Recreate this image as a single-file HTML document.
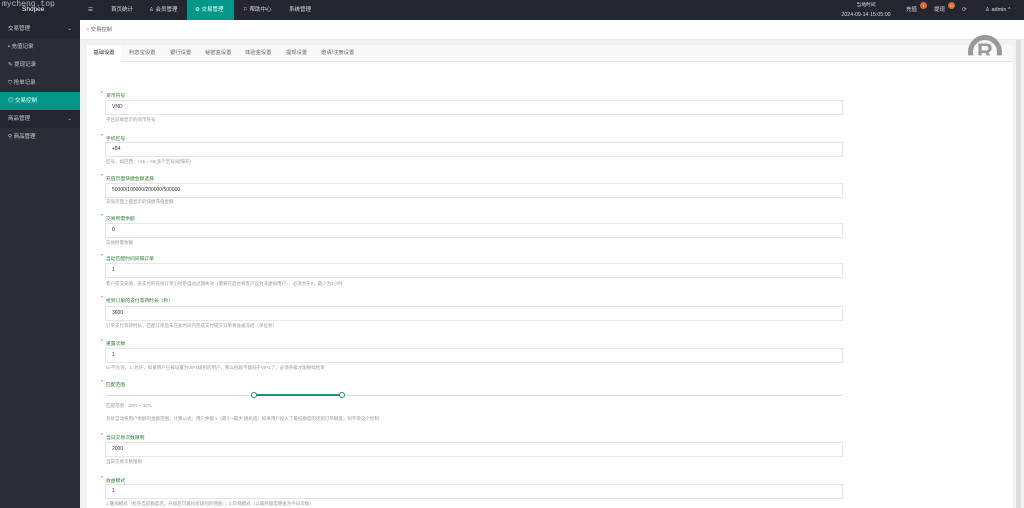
<!DOCTYPE html><html><head><meta charset="utf-8"><style>
*{margin:0;padding:0;box-sizing:border-box}
html{width:1024px;height:508px;overflow:hidden}
body{width:1024px;height:508px;overflow:hidden;background:#f2f2f2;font-family:"Liberation Sans","Noto Sans CJK SC",sans-serif;font-size:5px;color:#333;position:relative}
.a{position:absolute}
.top{left:0;top:0;width:1024px;height:20px;background:#23262e;color:#ddd}
.side{left:0;top:20px;width:80px;height:488px;background:#2a2d35;color:#ccc}
.si{position:absolute;left:0;width:80px;height:18px;line-height:18px;padding-left:8px;font-size:5.5px}
.card{left:87px;top:45px;width:926px;height:463px;background:#fff}
.lab{position:absolute;left:106px;color:#2e7d32;font-size:4.8px}
.lab:before{content:"* ";color:#c00;position:absolute;left:-5px;top:-1px}
.inp{position:absolute;left:105px;width:738px;height:15px;border:1px solid #e6e6e6;background:#fff;padding-left:6px;line-height:13px;font-size:5px;color:#333}
.hint{position:absolute;left:106px;color:#999;font-size:4.5px}
.nav{position:absolute;top:0;height:20px;line-height:20px;font-size:5.5px;color:#ddd}
.tab{position:absolute;top:45px;height:17px;line-height:17px;font-size:5.3px;color:#666}
</style></head><body>
<div class="a top">
<div class="nav" style="left:22px;color:#fff;font-size:6.5px">Shopee</div>
<div class="nav" style="left:2px;font-size:8px;font-family:'Liberation Mono',monospace;color:#bbb;top:-5px">mycheng.top</div>
<div class="nav" style="left:88px">☰</div>
<div class="nav" style="left:111px">首页统计</div>
<div class="nav" style="left:149px">♙ 会员管理</div>
<div class="nav" style="left:187px;width:47px;background:#009688;color:#fff;padding-left:8px">⚙ 交易管理</div>
<div class="nav" style="left:243px">⚐ 帮助中心</div>
<div class="nav" style="left:289px">系统管理</div>
<div class="nav" style="left:836px;top:-4px;width:60px;text-align:center;font-size:4.8px">当地时间</div>
<div class="nav" style="left:836px;top:5px;width:60px;text-align:center;font-size:5.3px">2024-09-14 15:05:00</div>
<div class="nav" style="left:906px">充值</div>
<div class="a" style="left:920px;top:2px;width:7px;height:7px;border-radius:50%;background:#e0662c;color:#fff;font-size:4px;text-align:center;line-height:7px">1</div>
<div class="nav" style="left:934px">提现</div>
<div class="a" style="left:948px;top:2px;width:7px;height:7px;border-radius:50%;background:#e0662c;color:#fff;font-size:4px;text-align:center;line-height:7px">0</div>
<div class="nav" style="left:962px">⟳</div>
<div class="nav" style="left:985px">♙ admin ^</div>
</div>
<div class="a side">
<div class="si" style="top:0;background:#23262e">交易管理<span style="position:absolute;right:8px">⌄</span></div>
<div class="si" style="top:18px">▪ 充值记录</div>
<div class="si" style="top:36px">✎ 提现记录</div>
<div class="si" style="top:54px">⛉ 抢单记录</div>
<div class="si" style="top:72px;background:#009688;color:#fff">◎ 交易控制</div>
<div class="si" style="top:90px;background:#23262e">商品管理<span style="position:absolute;right:8px">⌄</span></div>
<div class="si" style="top:108px">⚲ 商品管理</div>
</div>
<div class="a" style="left:80px;top:20px;width:944px;height:20px;background:#fff;border-bottom:1px solid #e6e6e6;line-height:20px;padding-left:6px;font-size:5.3px;color:#666">○ 交易控制</div>
<div class="a card"></div>
<div class="a" style="left:87px;top:45px;width:926px;height:17px;background:#f8f8f8;border-bottom:1px solid #e6e6e6"></div>
<div class="tab" style="left:87px;width:34px;background:#fff;color:#333;text-align:center;height:18px">基础设置</div>
<div class="tab" style="left:129px">利息宝设置</div>
<div class="tab" style="left:170px">银行设置</div>
<div class="tab" style="left:205px">秘密盒设置</div>
<div class="tab" style="left:245px">体验金设置</div>
<div class="tab" style="left:286px">提现设置</div>
<div class="tab" style="left:321px">邀请/注册设置</div>
<div class="a" style="left:968px;top:35px;width:34px;height:34px;border:5px solid #999;border-radius:50%;color:#999;font-size:22px;font-weight:bold;text-align:center;line-height:24px;clip-path:inset(0 0 40% 0)">R</div>
<div class="a" style="left:1016px;top:40px;width:5px;height:468px;background:#ddd"></div>

<div class="lab" style="top:92px">货币符号</div><div class="inp" style="top:100px">VND</div><div class="hint" style="top:117px">平台前端显示的货币符号</div>
<div class="lab" style="top:135px">手机区号</div><div class="inp" style="top:142px">+84</div><div class="hint" style="top:159px">区号，如巴西：+55 = 55(多个区号间|隔开)</div>
<div class="lab" style="top:175px">充值页面快捷金额选择</div><div class="inp" style="top:183px">50000/100000/200000/500000</div><div class="hint" style="top:199px">充值页面上面显示的快捷充值金额</div>
<div class="lab" style="top:215px">交易所需余额</div><div class="inp" style="top:223px">0</div><div class="hint" style="top:240px">交易所需余额</div>
<div class="lab" style="top:255px">自动匹配时间间隔订单</div><div class="inp" style="top:263px">1</div><div class="hint" style="top:281px">客户提交充值，未支付的充值订单小时后自动过期失效（需要在后台将客户设为非虚拟用户），必须大于0，最少为1小时</div>
<div class="lab" style="top:297px">抢到订单的支付等待时长（秒）</div><div class="inp" style="top:306px">3600</div><div class="hint" style="top:323px">订单支付等待时长，匹配订单后未在此时间内完成支付提交订单将会被冻结（单位秒）</div>
<div class="lab" style="top:340px">重置次数</div><div class="inp" style="top:348px">1</div><div class="hint" style="top:365px">0=不允许，1=允许，如果用户已被设置为VIP1级别的用户，那么他就不能低于VIP1了，必须升级才能继续抢单</div>
<div class="lab" style="top:381px">匹配范围</div>
<div class="a" style="left:106px;top:395px;width:736px;height:1px;background:#ddd"></div>
<div class="a" style="left:254px;top:394px;width:88px;height:2px;background:#2a8a80"></div>
<div class="a" style="left:251px;top:392px;width:6px;height:6px;border:1px solid #2a8a80;border-radius:50%;background:#fff"></div>
<div class="a" style="left:339px;top:392px;width:6px;height:6px;border:1px solid #2a8a80;border-radius:50%;background:#fff"></div>
<div class="hint" style="top:403px">匹配范围：20% ~ 32%</div>
<div class="hint" style="top:416px">系统自动将用户余额的金额范围，计算公式：用户余额 x（最小~最大 随机值）如果用户投入了最低额度的话则订单额度，则不受这个控制</div>
<div class="lab" style="top:434px">当日交易次数限制</div><div class="inp" style="top:442px">2000</div><div class="hint" style="top:459px">当日交易次数限制</div>
<div class="lab" style="top:477px">收益模式</div><div class="inp" style="top:484px">1</div><div class="hint" style="top:501px">1:叠加模式（抢完当前额度后，升级后可再抢新级别的佣金），2:阶梯模式（以最终额度佣金为今日次数）</div>
</body></html>
